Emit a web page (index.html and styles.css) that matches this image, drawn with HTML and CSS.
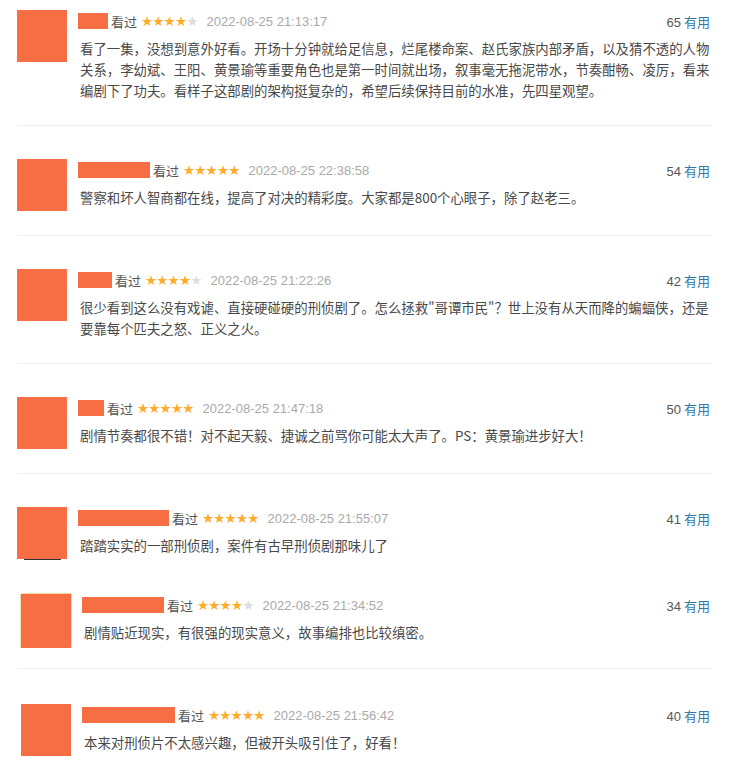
FILE: index.html
```html
<!DOCTYPE html>
<html lang="zh-CN">
<head>
    <meta charset="UTF-8">
    <meta name="viewport" content="width=device-width, initial-scale=1.0">
    <title>短评</title>
    <link rel="stylesheet" href="styles.css">
</head>
<body>
    <div class="comment-list">

        <div class="comment">
            <div class="avatar"></div>
            <div class="comment-body">
                <div class="comment-head">
                    <span class="name" style="width: 30px"></span>
                    <span class="watched">看过</span>
                    <span class="stars">★★★★<span class="off">★</span></span>
                    <span class="time">2022-08-25 21:13:17</span>
                    <span class="votes"><span class="count">65</span> <a href="#">有用</a></span>
                </div>
                <p class="comment-text">看了一集，没想到意外好看。开场十分钟就给足信息，烂尾楼命案、赵氏家族内部矛盾，以及猜不透的人物关系，李幼斌、王阳、黄景瑜等重要角色也是第一时间就出场，叙事毫无拖泥带水，节奏酣畅、凌厉，看来编剧下了功夫。看样子这部剧的架构挺复杂的，希望后续保持目前的水准，先四星观望。</p>
            </div>
        </div>

        <div class="comment">
            <div class="avatar"></div>
            <div class="comment-body">
                <div class="comment-head">
                    <span class="name" style="width: 72px"></span>
                    <span class="watched">看过</span>
                    <span class="stars">★★★★★</span>
                    <span class="time">2022-08-25 22:38:58</span>
                    <span class="votes"><span class="count">54</span> <a href="#">有用</a></span>
                </div>
                <p class="comment-text">警察和坏人智商都在线，提高了对决的精彩度。大家都是800个心眼子，除了赵老三。</p>
            </div>
        </div>

        <div class="comment">
            <div class="avatar"></div>
            <div class="comment-body">
                <div class="comment-head">
                    <span class="name" style="width: 34px"></span>
                    <span class="watched">看过</span>
                    <span class="stars">★★★★<span class="off">★</span></span>
                    <span class="time">2022-08-25 21:22:26</span>
                    <span class="votes"><span class="count">42</span> <a href="#">有用</a></span>
                </div>
                <p class="comment-text">很少看到这么没有戏谑、直接硬碰硬的刑侦剧了。怎么拯救"哥谭市民"？世上没有从天而降的蝙蝠侠，还是<br>要靠每个匹夫之怒、正义之火。</p>
            </div>
        </div>

        <div class="comment">
            <div class="avatar"></div>
            <div class="comment-body">
                <div class="comment-head">
                    <span class="name" style="width: 26px"></span>
                    <span class="watched">看过</span>
                    <span class="stars">★★★★★</span>
                    <span class="time">2022-08-25 21:47:18</span>
                    <span class="votes"><span class="count">50</span> <a href="#">有用</a></span>
                </div>
                <p class="comment-text">剧情节奏都很不错！对不起天毅、捷诚之前骂你可能太大声了。PS：黄景瑜进步好大！</p>
            </div>
        </div>

        <div class="comment comment-cut">
            <div class="avatar avatar-line"></div>
            <div class="comment-body">
                <div class="comment-head">
                    <span class="name" style="width: 91px"></span>
                    <span class="watched">看过</span>
                    <span class="stars">★★★★★</span>
                    <span class="time">2022-08-25 21:55:07</span>
                    <span class="votes"><span class="count">41</span> <a href="#">有用</a></span>
                </div>
                <p class="comment-text">踏踏实实的一部刑侦剧，案件有古早刑侦剧那味儿了</p>
            </div>
        </div>

        <div class="comment comment-shift comment-short">
            <div class="avatar avatar-edge"></div>
            <div class="comment-body">
                <div class="comment-head">
                    <span class="name" style="width: 82px"></span>
                    <span class="watched">看过</span>
                    <span class="stars">★★★★<span class="off">★</span></span>
                    <span class="time">2022-08-25 21:34:52</span>
                    <span class="votes"><span class="count">34</span> <a href="#">有用</a></span>
                </div>
                <p class="comment-text">剧情贴近现实，有很强的现实意义，故事编排也比较缜密。</p>
            </div>
        </div>

        <div class="comment comment-shift">
            <div class="avatar"></div>
            <div class="comment-body">
                <div class="comment-head">
                    <span class="name" style="width: 93px"></span>
                    <span class="watched">看过</span>
                    <span class="stars">★★★★★</span>
                    <span class="time">2022-08-25 21:56:42</span>
                    <span class="votes"><span class="count">40</span> <a href="#">有用</a></span>
                </div>
                <p class="comment-text">本来对刑侦片不太感兴趣，但被开头吸引住了，好看！</p>
            </div>
        </div>

    </div>
</body>
</html>
```

FILE: styles.css
```css
body {
    margin: 0;
    background-color: #fff;
    font-family: "Noto Sans CJK SC", "Liberation Sans", sans-serif;
    color: #494949;
}

.comment-list {
    width: 729px;
    padding: 0 17px 0 17px;
    box-sizing: border-box;
}

.comment {
    display: flex;
    align-items: flex-start;
    padding: 33px 2px 24px 0;
    border-bottom: 1px solid #efefef;
}

.comment:first-child {
    padding-top: 10px;
}

.comment:last-child {
    border-bottom: none;
    padding-top: 35px;
}

/* recorte sin separador entre la 5 y la 6 */
.comment-cut {
    border-bottom: none;
    padding-bottom: 2px;
}

.comment-shift {
    padding-left: 4px;
}

.comment-short {
    padding-bottom: 20px;
}

.avatar {
    flex: none;
    width: 50px;
    height: 52px;
    background-color: #f86e44;
    margin-right: 11px;
    position: relative;
}

.avatar-line::after {
    content: "";
    position: absolute;
    left: 7px;
    bottom: -1px;
    width: 37px;
    height: 1px;
    background-color: #333;
}

.avatar-edge {
    height: 54px;
    box-shadow: 1px -1px 0 #eadb9a, -1px 0 0 #efe2ac;
}

.comment-body {
    flex: 1;
    min-width: 0;
}

.comment-head {
    display: flex;
    align-items: center;
    height: 22px;
    font-size: 13px;
}

.name {
    display: inline-block;
    height: 16px;
    background-color: #f86e44;
    margin-right: 3px;
}

.watched {
    color: #555;
    margin-right: 4px;
}

.stars {
    font-family: "DejaVu Sans", sans-serif;
    font-size: 13.5px;
    letter-spacing: -0.8px;
    color: #ffac2d;
    margin-right: 9px;
}

.stars .off {
    color: #ddd;
}

.time {
    font-family: "Liberation Sans", sans-serif;
    color: #aaa;
}

.votes {
    margin-left: auto;
    color: #555;
}

.votes .count {
    font-family: "Liberation Sans", sans-serif;
}

.votes a {
    color: #3377aa;
    text-decoration: none;
}

.comment-text {
    margin: 6px 0 0 0;
    padding-left: 2px;
    font-size: 13.4px;
    line-height: 21px;
}
```
